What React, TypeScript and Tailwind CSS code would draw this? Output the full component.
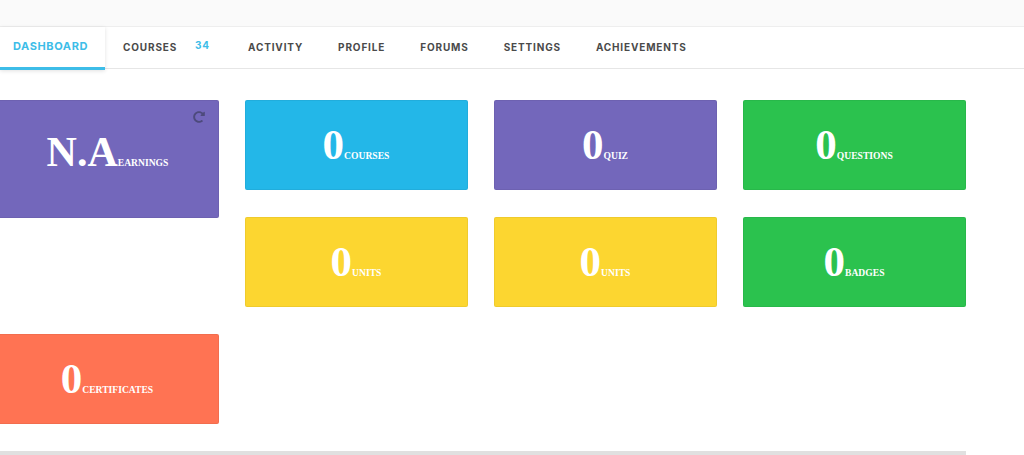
import { FaRedoAlt } from "react-icons/fa";

const tabs = [
  { label: "COURSES", badge: "34" },
  { label: "ACTIVITY" },
  { label: "PROFILE" },
  { label: "FORUMS" },
  { label: "SETTINGS" },
  { label: "ACHIEVEMENTS" },
];

function StatCard({ value, label, color }: { value: string; label: string; color: string }) {
  return (
    <div className={`h-[90px] rounded-[2px] border border-black/5 flex items-center justify-center pb-[2px] pr-[1px] text-white font-['Liberation_Serif',serif] font-bold ${color}`}>
      <span className="flex items-baseline">
        <span className="text-[43px] leading-none">{value}</span>
        <span className="text-[9.6px] leading-none">{label}</span>
      </span>
    </div>
  );
}

export default function App() {
  return (
    <div className="h-[455px] w-[1024px] overflow-hidden bg-white">
      <div className="h-[27px] bg-[#fafafa] border-b border-[#eeeeee]" />
      <nav className="h-[42px] flex border-b border-[#e6e6e6] font-['Inter',sans-serif] text-[10px] font-bold tracking-[0.85px]">
        <a className="w-[105px] h-[43px] flex items-center pl-[13px] pb-[2px] text-[11px] tracking-[0.6px] text-[#3dbde8] border-b-[3px] border-[#3dbde8] shadow-[0_1px_4px_rgba(0,0,0,0.12)]">
          DASHBOARD
        </a>
        <div className="flex items-center gap-[35px] pl-[18px] pb-[1px] text-[#4a4a4a]">
          {tabs.map((tab) => (
            <a key={tab.label} className={tab.badge ? "relative w-[90px]" : ""}>
              {tab.label}
              {tab.badge && (
                <span className="absolute left-[72px] top-[-2px] text-[#3dbde8]">{tab.badge}</span>
              )}
            </a>
          ))}
        </div>
      </nav>

      <div className="ml-[-4px] mt-[31px] w-[970px] grid grid-cols-[223px_223px_223px_223px] gap-x-[26px] gap-y-[27px]">
        <div className="relative row-span-2 self-start h-[118px] rounded-[2px] border border-black/5 bg-[#7367bb] flex items-center justify-center pb-[14px] text-white font-['Liberation_Serif',serif] font-bold">
          <FaRedoAlt className="absolute right-[13px] top-[10px] h-[12px] w-[12px] text-[#4d4a7c]" />
          <span className="flex items-baseline">
            <span className="text-[42px] leading-none">N.A</span>
            <span className="text-[9.6px] leading-none">EARNINGS</span>
          </span>
        </div>
        <StatCard value="0" label="COURSES" color="bg-[#23b7e8]" />
        <StatCard value="0" label="QUIZ" color="bg-[#7367bb]" />
        <StatCard value="0" label="QUESTIONS" color="bg-[#2bc24e]" />
        <StatCard value="0" label="UNITS" color="bg-[#fcd630]" />
        <StatCard value="0" label="UNITS" color="bg-[#fcd630]" />
        <StatCard value="0" label="BADGES" color="bg-[#2bc24e]" />
        <StatCard value="0" label="CERTIFICATES" color="bg-[#ff7353]" />
      </div>

      <div className="mt-[27px] h-[4px] w-[966px] bg-[#e0e0e0]" />
    </div>
  );
}
